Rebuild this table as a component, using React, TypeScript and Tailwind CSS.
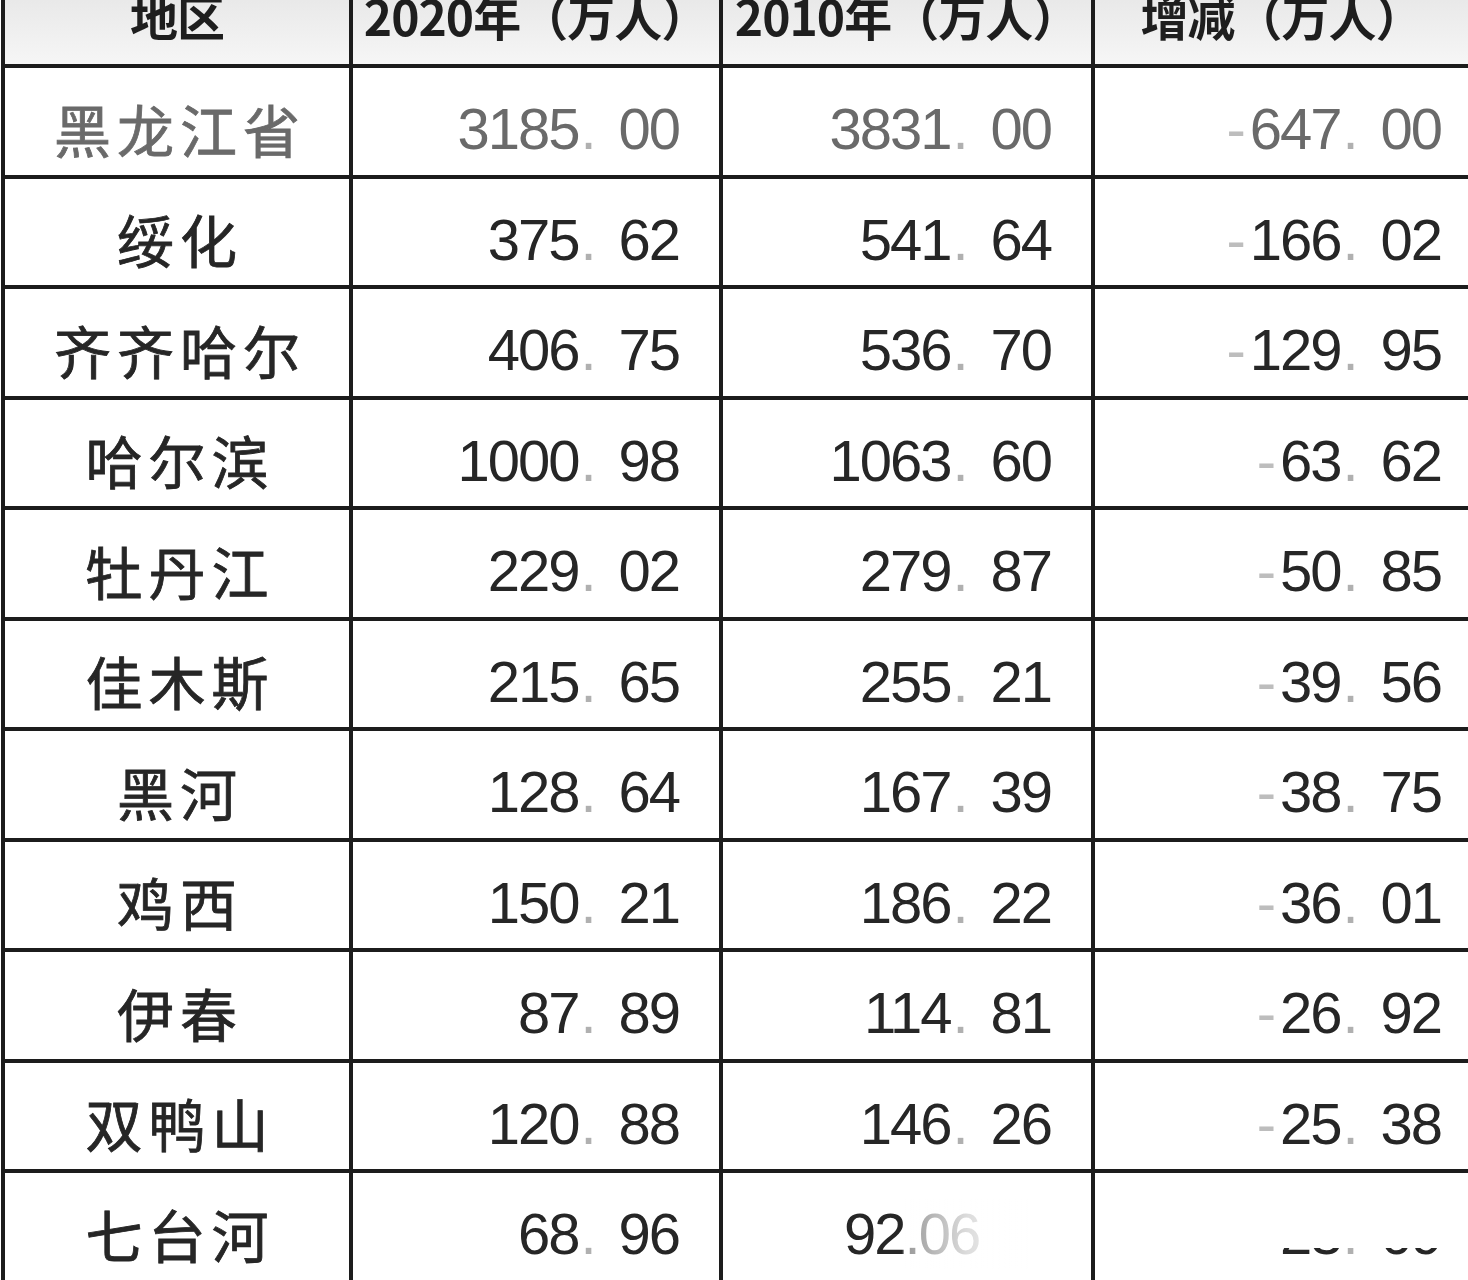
import React from "react";

type Row = { name: string; a: string; b: string; c: string };

const rows: Row[] = [
  { name: "黑龙江省", a: "3185.00", b: "3831.00", c: "-647.00" },
  { name: "绥化", a: "375.62", b: "541.64", c: "-166.02" },
  { name: "齐齐哈尔", a: "406.75", b: "536.70", c: "-129.95" },
  { name: "哈尔滨", a: "1000.98", b: "1063.60", c: "-63.62" },
  { name: "牡丹江", a: "229.02", b: "279.87", c: "-50.85" },
  { name: "佳木斯", a: "215.65", b: "255.21", c: "-39.56" },
  { name: "黑河", a: "128.64", b: "167.39", c: "-38.75" },
  { name: "鸡西", a: "150.21", b: "186.22", c: "-36.01" },
  { name: "伊春", a: "87.89", b: "114.81", c: "-26.92" },
  { name: "双鸭山", a: "120.88", b: "146.26", c: "-25.38" },
];

const numFont = { fontFamily: '"Liberation Sans", Arial, sans-serif' };
const cjkFont = { fontFamily: '"Noto Sans CJK SC", "Noto Sans", sans-serif' };

function Num({ v, faint }: { v: string; faint?: boolean }) {
  const neg = v.startsWith("-");
  const body = neg ? v.slice(1) : v;
  const [i, f] = body.split(".");
  return (
    <span className="inline-flex items-baseline leading-none" style={numFont}>
      {neg && <span className={`mr-[6px] ${faint ? "text-[#c4c4c4]" : "text-[#bdbdbd]"}`}>-</span>}
      <span>{i}</span>
      <span className="inline-block w-[40px] pl-[2px] text-left text-[#b0b0b0]">.</span>
      <span>{f}</span>
    </span>
  );
}

function HeadCell({ children, last }: { children: React.ReactNode; last?: boolean }) {
  return (
    <div
      className={`flex items-center justify-center bg-gradient-to-b from-[#e2e2e2] via-[#ececec] to-[#f6f6f6] ${last ? "" : "border-r-4 border-[#1c1c1c]"}`}
    >
      <span className="text-[48px] font-bold leading-none text-[#1e1e1e] whitespace-nowrap tracking-[-1px]" style={cjkFont}>
        {children}
      </span>
    </div>
  );
}

export default function App() {
  return (
    <div className="w-[1468px] h-[1280px] overflow-hidden bg-white">
      <div className="-mt-[34px] ml-[1px] border-l-4 border-[#1c1c1c] blur-[0.6px]">
        {/* header */}
        <div className="grid grid-cols-[348px_370px_372px_1fr] h-[102px] border-b-4 border-[#1c1c1c]">
          <HeadCell>地区</HeadCell>
          <HeadCell>2020年（万人）</HeadCell>
          <HeadCell>2010年（万人）</HeadCell>
          <HeadCell last>增减（万人）</HeadCell>
        </div>

        {rows.map((r, idx) => {
          const color = idx === 0 ? "text-[#6a6a6a]" : "text-[#262626]";
          return (
            <div
              key={r.name}
              className={`grid grid-cols-[348px_370px_372px_1fr] h-[110.5px] border-b-4 border-[#1c1c1c] ${color}`}
            >
              <div className="flex items-center justify-center pt-[14px] border-r-4 border-[#1c1c1c]">
                <span
                  className="text-[57px] leading-none tracking-[6px] pl-[6px] whitespace-nowrap [-webkit-text-stroke:0.8px_currentColor]"
                  style={cjkFont}
                >
                  {r.name}
                </span>
              </div>
              <div className="flex items-center justify-end pt-[16px] pr-[40px] border-r-4 border-[#1c1c1c] text-[58px] tracking-[-2px]">
                <Num v={r.a} />
              </div>
              <div className="flex items-center justify-end pt-[16px] pr-[40px] border-r-4 border-[#1c1c1c] text-[58px] tracking-[-2px]">
                <Num v={r.b} />
              </div>
              <div className="flex items-center justify-end pt-[16px] pr-[27px] text-[58px] tracking-[-2px]">
                <Num v={r.c} />
              </div>
            </div>
          );
        })}

        {/* last, partly obscured row */}
        <div className="grid grid-cols-[348px_370px_372px_1fr] h-[110.5px] border-b-4 border-[#1c1c1c] text-[#262626]">
          <div className="flex items-center justify-center pt-[14px] border-r-4 border-[#1c1c1c]">
            <span
              className="text-[57px] leading-none tracking-[6px] pl-[6px] whitespace-nowrap [-webkit-text-stroke:0.8px_currentColor]"
              style={cjkFont}
            >
              七台河
            </span>
          </div>
          <div className="flex items-center justify-end pt-[16px] pr-[40px] border-r-4 border-[#1c1c1c] text-[58px] tracking-[-2px]">
            <Num v="68.96" />
          </div>
          <div className="flex items-center justify-start pt-[16px] pl-[121px] border-r-4 border-[#1c1c1c] text-[58px] tracking-[-2px]">
            <span className="relative inline-flex items-baseline leading-none" style={numFont}>
              <span>92</span>
              <span className="text-[#8a8a8a]">.06</span>
              <span className="absolute left-[58px] -top-[6px] -bottom-[6px] w-[130px] bg-gradient-to-r from-white/10 via-white/70 to-white" />
            </span>
          </div>
          <div className="flex items-center justify-end pt-[16px] pr-[27px] text-[58px] tracking-[-2px]">
            <span className="relative inline-flex">
              <Num v="-23.09" faint />
              <span className="absolute inset-x-0 -top-[6px] bottom-[15px] bg-white" />
            </span>
          </div>
        </div>
      </div>
    </div>
  );
}
